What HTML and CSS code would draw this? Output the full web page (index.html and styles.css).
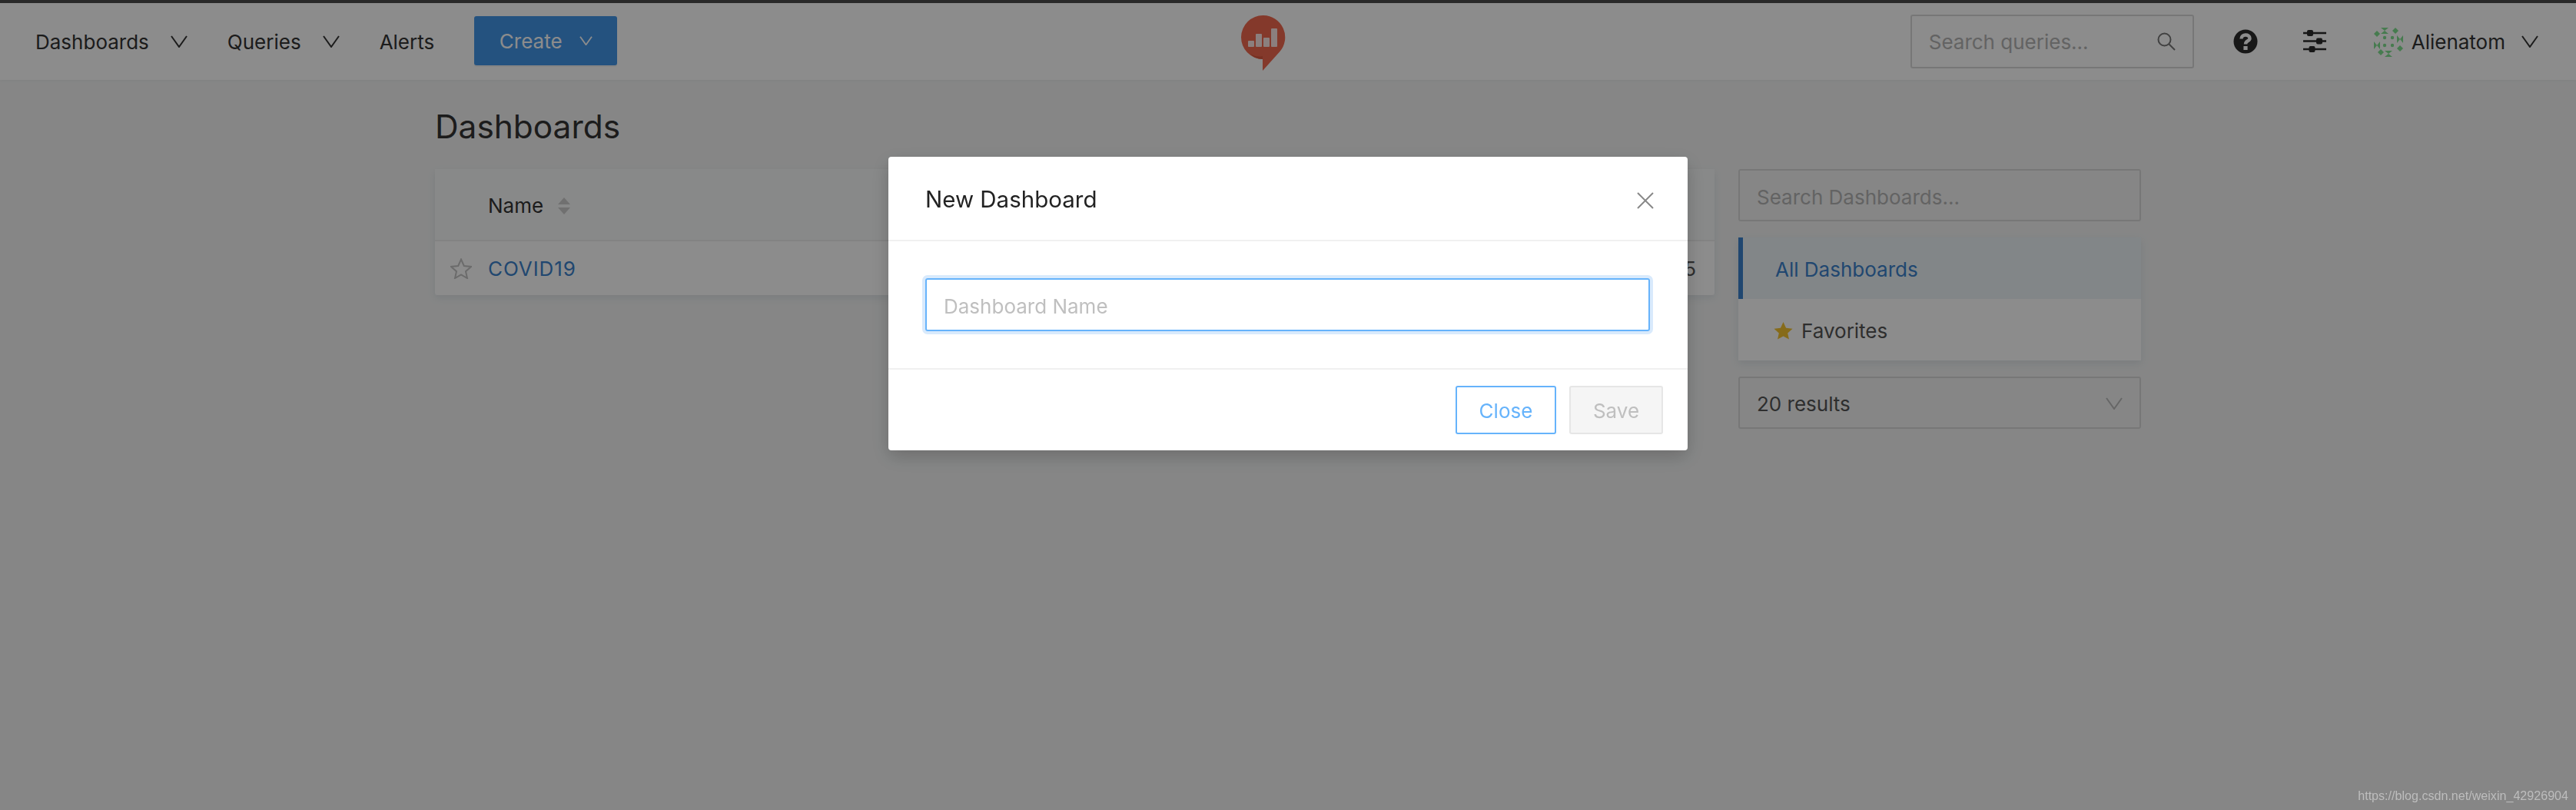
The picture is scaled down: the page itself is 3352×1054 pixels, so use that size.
FILE: index.html
```html
<!DOCTYPE html>
<html lang="en">
<head>
    <meta charset="UTF-8">
    <meta name="viewport" content="width=device-width, initial-scale=1.0">
    <title>Dashboards</title>
    <link rel="stylesheet" href="styles.css">
</head>
<body>
    <div class="topline"></div>
    <nav class="navbar">
        <div class="nav-left">
            <a class="nav-item">Dashboards
                <svg class="chev" viewBox="0 0 22 16"><path d="M1 1 L11 15 L21 1"/></svg>
            </a>
            <a class="nav-item">Queries
                <svg class="chev" viewBox="0 0 22 16"><path d="M1 1 L11 15 L21 1"/></svg>
            </a>
            <a class="nav-item">Alerts</a>
            <button class="create-btn">Create
                <svg class="chev small" viewBox="0 0 22 16"><path d="M1 1 L11 15 L21 1"/></svg>
            </button>
        </div>
        <svg class="logo" viewBox="0 0 58 73">
            <path class="logo-red" d="M29 0 A28.5 28.5 0 0 1 50 47.5 L28 72 L28 57 A28.5 28.5 0 0 1 29 0 Z"/>
            <path class="logo-dark" d="M12 50 Q20 55 28 53 L28 57 Q18 57 12 50 Z"/>
            <rect class="logo-bar" x="9" y="33" width="8" height="8" rx="1"/>
            <rect class="logo-bar" x="19" y="24" width="8" height="17" rx="1"/>
            <rect class="logo-bar" x="29" y="29" width="8" height="12" rx="1"/>
            <rect class="logo-bar" x="39" y="17" width="8" height="24" rx="1"/>
        </svg>
        <div class="nav-right">
            <div class="nav-search">
                <span class="placeholder">Search queries...</span>
                <svg class="search-icon" viewBox="0 0 24 24"><circle cx="9.5" cy="9.5" r="8"/><path d="M15.5 15.5 L23 23"/></svg>
            </div>
            <svg class="help-icon" viewBox="0 0 32 32">
                <circle class="help-bg" cx="16" cy="16" r="15.5"/>
                <path class="help-q" d="M10.5 12.5 C10.5 6 21.5 6 21.5 12 C21.5 15.5 16 15 16 19.5"/>
                <rect class="help-dot" x="13.4" y="22" width="5.2" height="5"/>
            </svg>
            <svg class="sliders-icon" viewBox="0 0 32 30">
                <path class="sl-line" d="M1 4 H31 M1 14.5 H31 M1 25 H31"/>
                <rect x="6" y="0" width="8" height="8" rx="2"/>
                <rect x="18" y="10.5" width="8" height="8" rx="2"/>
                <rect x="8.5" y="21" width="8" height="8" rx="2"/>
            </svg>
            <svg class="avatar" viewBox="0 0 40 40">
                <path d="M5 6 L9 10 L5 14 L1 10 Z M29 2 L33 6 L29 10 L25 6 Z M35 25 L39 29 L35 33 L31 29 Z M10 30 L14 34 L10 38 L6 34 Z"/>
                <path d="M10 2 L20 2 L15 6 L20 10 L10 10 L15 6 Z M31 12 L31 22 L35 17 L39 22 L39 12 L35 17 Z M1 20 L1 30 L5 25 L9 30 L9 20 L5 25 Z M15 32 L25 32 L20 36 L25 40 L15 40 L20 36 Z"/>
                <circle cx="15" cy="15" r="2.2"/><circle cx="25" cy="15" r="2.2"/>
                <circle cx="15" cy="25" r="2.2"/><circle cx="25" cy="25" r="2.2"/>
            </svg>
            <span class="user-name">Alienatom</span>
            <svg class="chev user-chev" viewBox="0 0 22 16"><path d="M1 1 L11 15 L21 1"/></svg>
        </div>
    </nav>

    <main class="content">
        <h1 class="page-title">Dashboards</h1>
        <div class="columns">
            <div class="table-card">
                <div class="table-head">
                    <span class="col-name">Name</span>
                    <span class="sorter"><i class="up"></i><i class="down"></i></span>
                </div>
                <div class="table-row">
                    <svg class="star-empty" viewBox="0 0 28 27"><path d="M14 1.5 L17.8 10 L27 11 L20 17.2 L22 26 L14 21.4 L6 26 L8 17.2 L1 11 L10.2 10 Z"/></svg>
                    <a class="dash-link">COVID19</a>
                    <span class="row-date">5</span>
                </div>
            </div>
            <aside class="sidebar">
                <div class="side-search"><span class="placeholder">Search Dashboards...</span></div>
                <ul class="side-menu">
                    <li class="active">All Dashboards</li>
                    <li>
                        <svg class="star-full" viewBox="0 0 28 27"><path d="M14 1 L18 9.8 L27.5 11 L20.4 17.4 L22.4 26.5 L14 21.8 L5.6 26.5 L7.6 17.4 L.5 11 L10 9.8 Z"/></svg>
                        Favorites
                    </li>
                </ul>
                <div class="side-select">
                    <span>20 results</span>
                    <svg class="chev light" viewBox="0 0 22 16"><path d="M1 1 L11 15 L21 1"/></svg>
                </div>
            </aside>
        </div>
    </main>

    <div class="mask">
        <div class="modal">
            <div class="modal-header">
                <span class="modal-title">New Dashboard</span>
                <svg class="modal-close" viewBox="0 0 22 22"><path d="M1 1 L21 21 M21 1 L1 21"/></svg>
            </div>
            <div class="modal-body">
                <div class="name-input"><span>Dashboard Name</span></div>
            </div>
            <div class="modal-footer">
                <button class="btn-close">Close</button>
                <button class="btn-save">Save</button>
            </div>
        </div>
    </div>

    <div class="watermark">https://blog.csdn.net/weixin_42926904</div>
</body>
</html>
```

FILE: styles.css
```css
* {
  box-sizing: border-box;
}

body {
  margin: 0;
  height: 100vh;
  overflow: hidden;
  font-family: Inter, "Noto Sans", sans-serif;
  font-size: 26px;
  color: #333;
  background: #f4f5f5;
}

.topline {
  height: 4px;
  background: #4c4c4c;
}

.navbar {
  height: 100px;
  background: #fff;
  display: flex;
  justify-content: space-between;
  align-items: center;
  padding: 0 49px 0 46px;
  box-shadow: 0 1px 4px rgba(0, 0, 0, 0.05);
}

.nav-left,
.nav-right {
  display: flex;
  align-items: center;
}

.nav-item {
  display: flex;
  align-items: center;
  margin-right: 52px;
  color: #333;
}

.chev {
  width: 22px;
  height: 16px;
  margin-left: 28px;
  flex: none;
}

.chev path {
  fill: none;
  stroke: #333;
  stroke-width: 2;
}

.user-chev {
  margin-left: 21px;
}

.chev.small {
  width: 17px;
  height: 12px;
  margin-left: 22px;
}

.chev.small path {
  stroke: #fff;
  stroke-width: 2.4;
}

.chev.light path {
  stroke: #bbb;
}

.create-btn {
  width: 186px;
  height: 64px;
  margin-bottom: 2px;
  display: flex;
  justify-content: center;
  align-items: center;
  background: #4396e7;
  color: #fff;
  border: none;
  border-radius: 3px;
  font: inherit;
  box-shadow: 0 2px 0 rgba(0, 0, 0, 0.05);
}

.logo {
  width: 58px;
  height: 73px;
  margin-top: 4px;
}

.logo-red {
  fill: #f1694f;
}

.logo-dark {
  fill: #d9583f;
}

.logo-bar {
  fill: #fff;
  opacity: 0.85;
}

.nav-search {
  width: 369px;
  height: 70px;
  border: 2px solid #d9d9d9;
  border-radius: 3px;
  display: flex;
  justify-content: space-between;
  align-items: center;
  padding: 0 22px;
  margin-right: 51px;
}

.placeholder {
  color: #b4b4b4;
}

.search-icon {
  width: 24px;
  height: 24px;
}

.search-icon circle,
.search-icon path {
  fill: none;
  stroke: #777;
  stroke-width: 2;
}

.help-icon {
  width: 32px;
  height: 32px;
  margin-right: 58px;
}

.help-bg {
  fill: #2b2b2b;
}

.help-q {
  fill: none;
  stroke: #fff;
  stroke-width: 4.4;
}

.help-dot {
  fill: #fff;
}

.sliders-icon {
  width: 32px;
  height: 30px;
  margin-right: 60px;
  fill: #2b2b2b;
}

.sl-line {
  stroke: #2b2b2b;
  stroke-width: 2.6;
}

.avatar {
  width: 40px;
  height: 40px;
  margin-right: 10px;
  fill: #80e090;
}

.user-name {
  color: #333;
}

.content {
  width: 2220px;
  margin: 0 auto;
}

.page-title {
  font-size: 42.4px;
  font-weight: 400;
  line-height: 56px;
  margin: 33px 0 27px;
  color: #333;
}

.columns {
  display: grid;
  grid-template-columns: 1665px 524px;
  gap: 31px;
  align-items: start;
}

.table-card {
  background: #fff;
  border-radius: 3px;
  box-shadow: 0 4px 10px rgba(102, 136, 153, 0.15);
}

.table-head {
  height: 94px;
  background: #f8fafa;
  border-bottom: 2px solid #eee;
  display: flex;
  align-items: center;
  padding: 3px 0 0 69px;
}

.col-name {
  color: #333;
}

.sorter {
  display: flex;
  flex-direction: column;
  gap: 4px;
  margin-left: 19px;
}

.sorter i {
  display: block;
  width: 0;
  height: 0;
  border-left: 8px solid transparent;
  border-right: 8px solid transparent;
}

.sorter .up {
  border-bottom: 9px solid #ccc;
}

.sorter .down {
  border-top: 9px solid #ccc;
}

.table-row {
  height: 70px;
  display: flex;
  align-items: center;
  padding-left: 20px;
}

.star-empty {
  width: 28px;
  height: 27px;
  margin-right: 21px;
}

.star-empty path {
  fill: none;
  stroke: #c4c4c4;
  stroke-width: 2;
}

.dash-link {
  color: #3b82cc;
  letter-spacing: 0.9px;
}

.row-date {
  margin-left: auto;
  padding-right: 24px;
  color: #555;
}

.side-search {
  height: 68px;
  border: 2px solid #d9d9d9;
  border-radius: 3px;
  display: flex;
  align-items: center;
  padding: 4px 22px 0;
}

.side-menu {
  list-style: none;
  margin: 21px 0;
  padding: 0;
  background: #fff;
  box-shadow: 0 4px 10px rgba(102, 136, 153, 0.15);
}

.side-menu li {
  height: 80px;
  display: flex;
  align-items: center;
  padding: 2px 0 0 46px;
  color: #555;
}

.side-menu .active {
  background: #edf4f8;
  color: #3b82cc;
  border-left: 6px solid #3b82cc;
  padding-left: 42px;
}

.star-full {
  width: 25px;
  height: 24px;
  margin-right: 11px;
  fill: #f4c430;
}

.side-select {
  height: 68px;
  border: 2px solid #d9d9d9;
  border-radius: 3px;
  display: flex;
  justify-content: space-between;
  align-items: center;
  padding: 2px 22px 0;
  color: #555;
}

.mask {
  position: fixed;
  top: 0;
  left: 0;
  right: 0;
  bottom: 0;
  background: rgba(0, 0, 0, 0.45);
  display: flex;
  justify-content: center;
  align-items: flex-start;
  padding-top: 204px;
}

.modal {
  width: 1040px;
  height: 382px;
  background: #fff;
  border-radius: 4px;
  box-shadow: 0 8px 24px rgba(0, 0, 0, 0.2);
  display: flex;
  flex-direction: column;
}

.modal-header {
  height: 110px;
  border-bottom: 2px solid #f0f0f0;
  display: flex;
  justify-content: space-between;
  align-items: center;
  padding: 0 44px 0 48px;
}

.modal-title {
  font-size: 29.5px;
  color: #222;
  padding-top: 2px;
}

.modal-close {
  width: 22px;
  height: 22px;
  margin-top: 5px;
}

.modal-close path {
  fill: none;
  stroke: #888;
  stroke-width: 2;
}

.modal-body {
  flex: 1;
  display: flex;
  align-items: center;
  padding: 0 49px 0 48px;
  border-bottom: 2px solid #f0f0f0;
}

.name-input {
  width: 100%;
  height: 69px;
  border: 2px solid #66b3fb;
  border-radius: 3px;
  box-shadow: 0 0 0 4px #d9eafc;
  display: flex;
  align-items: center;
  padding: 3px 0 0 22px;
  color: #bfbfbf;
}

.modal-footer {
  height: 105px;
  display: flex;
  justify-content: flex-end;
  align-items: center;
  gap: 17px;
  padding-right: 32px;
}

.modal-footer button {
  height: 63px;
  padding: 2px 0 0;
  font: inherit;
  border-radius: 3px;
}

.btn-close {
  width: 131px;
  background: #fff;
  border: 2px solid #66b3fb;
  color: #66b3fb;
}

.btn-save {
  width: 122px;
  background: #f5f5f5;
  border: 2px solid #e6e6e6;
  color: #bfbfbf;
}

.watermark {
  position: fixed;
  right: 10px;
  bottom: 9px;
  font-family: "Liberation Sans", sans-serif;
  font-size: 16.1px;
  color: #bdbdbd;
}
```
